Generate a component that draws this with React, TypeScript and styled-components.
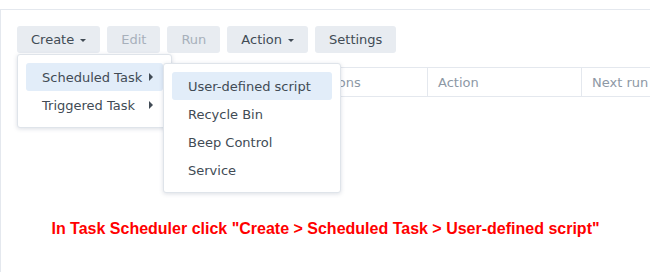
import React from "react";
import styled, { createGlobalStyle } from "styled-components";

const GlobalStyle = createGlobalStyle`
  body {
    margin: 0;
    background: #ffffff;
  }
`;

const color = {
  border: "#e4e8ee",
  text: "#414b55",
  muted: "#a7b0bb",
  header: "#8d98a5",
  button: "#e8ecf1",
  hover: "#e2edf9",
};

type TColumn = { readonly label: string; readonly width: number };

// first column sits under the open menus, so it's left blank
const columns: TColumn[] = [
  { label: "", width: 264 },
  { label: "Conditions", width: 146 },
  { label: "Action", width: 154 },
  { label: "Next run time", width: 120 },
];

const createItems = ["Scheduled Task", "Triggered Task"];
const scheduledItems = ["User-defined script", "Recycle Bin", "Beep Control", "Service"];

export default function App() {
  return (
    <Page>
      <GlobalStyle />
      <Panel>
        <Toolbar>
          <Button>
            Create <Caret />
          </Button>
          <Button disabled>Edit</Button>
          <Button disabled>Run</Button>
          <Button>
            Action <Caret />
          </Button>
          <Button>Settings</Button>
        </Toolbar>

        <TableHeader>
          {columns.map(({ label, width }, i) => (
            <HeaderCell key={i} $width={width} $first={i === 0}>
              {label}
            </HeaderCell>
          ))}
        </TableHeader>

        <Caption>
          In Task Scheduler click "Create &gt; Scheduled Task &gt; User-defined script"
        </Caption>
      </Panel>

      <CreateMenu>
        {createItems.map((item, i) => (
          <MenuItem key={item} $active={i === 0}>
            {item}
            <Arrow />
          </MenuItem>
        ))}
      </CreateMenu>

      <SubMenu>
        {scheduledItems.map((item, i) => (
          <MenuItem key={item} $active={i === 0}>
            {item}
          </MenuItem>
        ))}
      </SubMenu>
    </Page>
  );
}

const Page = styled.div`
  position: relative;
  width: 650px;
  height: 272px;
  overflow: hidden;
  font-family: "DejaVu Sans", Verdana, sans-serif;
  font-size: 13px;
  color: ${color.text};
`;

const Panel = styled.div`
  margin-top: 9px;
  height: 263px;
  box-sizing: border-box;
  border-top: 1px solid ${color.border};
  border-left: 1px solid ${color.border};
  padding: 16px 0 0 16px;
  display: flex;
  flex-direction: column;
`;

const Toolbar = styled.div`
  display: flex;
  gap: 7px;
`;

const Button = styled.button`
  height: 27px;
  padding: 0 14px;
  border: none;
  border-radius: 3px;
  background: ${color.button};
  color: ${color.text};
  font-family: inherit;
  font-size: 13px;
  display: flex;
  align-items: center;
  gap: 6px;

  &:disabled {
    color: ${color.muted};
  }
`;

const Caret = styled.span`
  width: 0;
  height: 0;
  border-left: 3px solid transparent;
  border-right: 3px solid transparent;
  border-top: 3px solid ${color.text};
  margin-top: 1px;
`;

const TableHeader = styled.div`
  margin-top: 14px;
  display: flex;
  height: 28px;
  border-top: 1px solid ${color.border};
  border-bottom: 1px solid ${color.border};
`;

const HeaderCell = styled.div<{ $width: number; $first: boolean }>`
  flex: 0 0 ${(p) => p.$width}px;
  box-sizing: border-box;
  padding-left: 10px;
  display: flex;
  align-items: center;
  color: ${color.header};
  white-space: nowrap;
  border-left: ${(p) => (p.$first ? "none" : `1px solid ${color.border}`)};
`;

const Caption = styled.div`
  margin-top: 123px;
  margin-left: -16px;
  text-align: center;
  font-family: "Liberation Sans", Arial, sans-serif;
  font-weight: bold;
  font-size: 16px;
  line-height: 18px;
  color: #ff0000;
`;

const Menu = styled.div`
  position: absolute;
  box-sizing: border-box;
  background: #ffffff;
  border: 1px solid #dfe4ea;
  border-radius: 3px;
  box-shadow: 0 1px 4px rgba(60, 80, 110, 0.18);
  padding: 8px;
  display: flex;
  flex-direction: column;
`;

const CreateMenu = styled(Menu)`
  left: 17px;
  top: 54px;
  width: 155px;
  height: 74px;
`;

const SubMenu = styled(Menu)`
  left: 163px;
  top: 63px;
  width: 178px;
  height: 130px;
`;

const MenuItem = styled.div<{ $active?: boolean }>`
  height: 28px;
  flex: 0 0 auto;
  display: flex;
  align-items: center;
  padding-left: 16px;
  border-radius: 3px;
  background: ${(p) => (p.$active ? color.hover : "transparent")};
  white-space: nowrap;
  position: relative;
`;

const Arrow = styled.span`
  position: absolute;
  left: 123px;
  top: 10px;
  width: 0;
  height: 0;
  border-top: 4px solid transparent;
  border-bottom: 4px solid transparent;
  border-left: 4px solid ${color.text};
`;
